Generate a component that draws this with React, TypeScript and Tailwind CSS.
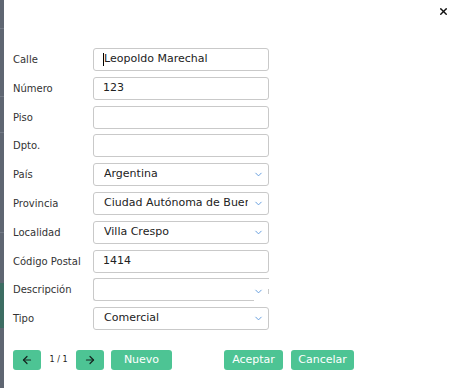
import { ArrowLeft, ArrowRight, ChevronDown, X } from 'lucide-react'

// ─── helpers ────────────────────────────────────────────────────────────────

const font = { fontFamily: '"DejaVu Sans", Verdana, sans-serif' }

function TextBox({ value, caret }: { value?: string; caret?: boolean }) {
  return (
    <div className="flex items-center h-[23px] w-[176px] border border-[#c9c9c9] rounded-[3px] pl-[9px] text-[11px] text-[#222]">
      {caret && <span className="w-px h-[13px] bg-black" />}
      {value}
    </div>
  )
}

function SelectBox({ value }: { value: string }) {
  return (
    <div className="flex items-center h-[23px] w-[176px] border border-[#c9c9c9] rounded-[3px] pl-[10px] pr-[4px] text-[11px] text-[#222]">
      <span className="flex-1 overflow-hidden whitespace-nowrap">{value}</span>
      <ChevronDown className="w-[11px] h-[11px] ml-[5px] text-[#5b97dc]" strokeWidth={2} />
    </div>
  )
}

function BrokenSelect() {
  return (
    <div className="relative flex items-center justify-end h-[23px] w-[176px] border-l border-t border-b border-[#c9c9c9] rounded-l-[3px] pr-[5px]">
      <ChevronDown className="w-[11px] h-[11px] mt-[4px] text-[#5b97dc]" strokeWidth={2} />
      <span className="absolute right-0 top-[10px] w-px h-[5px] bg-[#c9c9c9]" />
      <span className="absolute right-0 bottom-[-1px] w-[15px] h-[2px] bg-white" />
    </div>
  )
}

function Row({ label, children }: { label: string; children: React.ReactNode }) {
  return (
    <div className="flex items-center">
      <div className="w-[80px] text-[10px] text-[#333]">{label}</div>
      {children}
    </div>
  )
}

function GreenBtn({ children, w }: { children: React.ReactNode; w: string }) {
  return (
    <button
      className={`flex items-center justify-center h-[20px] ${w} rounded-[3px] bg-[#4dc494] text-white text-[11px]`}
    >
      {children}
    </button>
  )
}

// ─── main component ──────────────────────────────────────────────────────────

export default function App() {
  return (
    <div className="flex w-[458px] h-[388px] overflow-hidden" style={font}>
      {/* backdrop sliver */}
      <div className="w-[4px] h-full bg-[#5f6672] flex flex-col">
        <div className="h-[29px] border-b border-[#737a86]" />
        <div className="h-[68px] border-b border-[#737a86]" />
        <div className="h-[36px] border-b border-[#737a86]" />
        <div className="h-[100px] border-b border-[#737a86]" />
        <div className="h-[50px]" />
        <div className="h-[45px] bg-[#3d6d63]" />
      </div>

      <div className="flex-1 bg-white flex flex-col pl-[9px]">
        <div className="flex justify-end h-[48px] pt-[6px] pr-[9px]">
          <X className="w-[11px] h-[11px] text-[#111]" strokeWidth={3} />
        </div>

        <div className="flex flex-col gap-[5.8px]">
          <Row label="Calle">
            <TextBox value="Leopoldo Marechal" caret />
          </Row>
          <Row label="Número">
            <TextBox value="123" />
          </Row>
          <Row label="Piso">
            <TextBox />
          </Row>
          <Row label="Dpto.">
            <TextBox />
          </Row>
          <Row label="País">
            <SelectBox value="Argentina" />
          </Row>
          <Row label="Provincia">
            <SelectBox value="Ciudad Autónoma de Buenos Aires" />
          </Row>
          <Row label="Localidad">
            <SelectBox value="Villa Crespo" />
          </Row>
          <Row label="Código Postal">
            <TextBox value="1414" />
          </Row>
          <Row label="Descripción">
            <BrokenSelect />
          </Row>
          <Row label="Tipo">
            <SelectBox value="Comercial" />
          </Row>
        </div>

        <div className="flex items-center mt-[20px]">
          <GreenBtn w="w-[28px]">
            <ArrowLeft className="w-[12px] h-[12px] text-[#15241e]" strokeWidth={2.4} />
          </GreenBtn>
          <span className="w-[35px] text-center text-[8px] text-[#222]">1 / 1</span>
          <GreenBtn w="w-[28px]">
            <ArrowRight className="w-[12px] h-[12px] text-[#15241e]" strokeWidth={2.4} />
          </GreenBtn>
          <div className="w-[7px]" />
          <GreenBtn w="w-[61px]">Nuevo</GreenBtn>
          <div className="w-[52px]" />
          <GreenBtn w="w-[59px]">Aceptar</GreenBtn>
          <div className="w-[8px]" />
          <GreenBtn w="w-[63px]">Cancelar</GreenBtn>
        </div>
      </div>
    </div>
  )
}
